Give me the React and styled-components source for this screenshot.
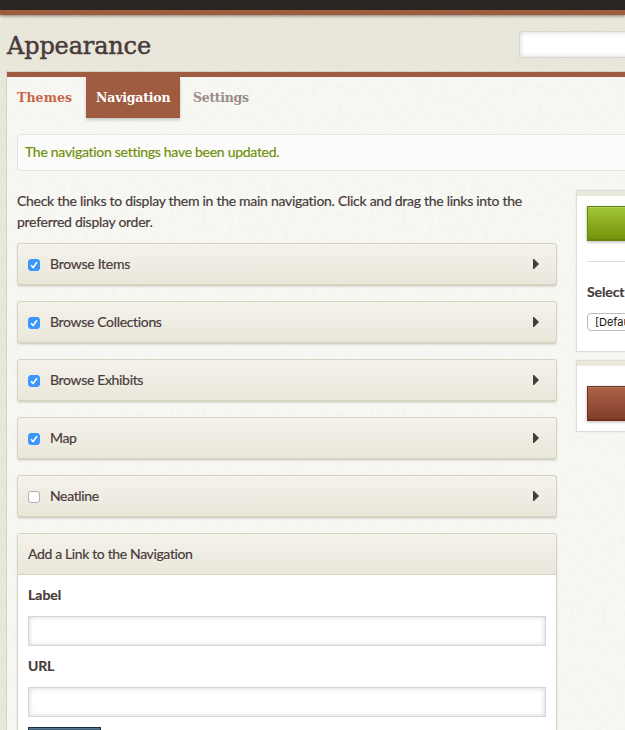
import React from 'react';
import styled, { createGlobalStyle } from 'styled-components';

const grain = (freq, alpha) =>
  `url("data:image/svg+xml,${encodeURIComponent(
    `<svg xmlns='http://www.w3.org/2000/svg' width='200' height='200'><filter id='n' x='0' y='0' width='100%' height='100%'><feTurbulence type='fractalNoise' baseFrequency='${freq}' numOctaves='2' stitchTiles='stitch'/><feColorMatrix values='0 0 0 0 0.25 0 0 0 0 0.22 0 0 0 0 0.12 ${alpha} 0 0 0 ${-alpha * 0.4}'/></filter><rect width='200' height='200' filter='url(#n)'/></svg>`
  )}")`;

const linen = grain(0.6, 0.2);
const paper = grain(0.22, 0.07);
const brick = grain(0.5, 0.6);

const GlobalStyle = createGlobalStyle`
  * { box-sizing: border-box; }
  html, body { margin: 0; height: 730px; overflow: hidden; }
  body {
    background: #ebe9dd ${linen};
    color: #483b3b;
    font: 14px/21px Lato, sans-serif;
  }
`;

const Page = styled.div`
  width: 625px;
  height: 730px;
  overflow: hidden;
`;

const TopBar = styled.div`
  height: 15px;
  background: #a0593e ${brick};
  border-top: 10px solid #2b2621;
  box-shadow: 0 1px 3px rgba(0, 0, 0, 0.45);
`;

const Header = styled.header`
  display: flex;
  justify-content: space-between;
  height: 57px;
  padding-left: 7px;
`;

const Title = styled.h1`
  margin: 13px 0 0;
  font: 400 24px/36px 'DejaVu Serif', serif;
  letter-spacing: ${(p) => p.$track}px;
  -webkit-text-stroke: 0.5px #483b3b;
`;

const Search = styled.input`
  width: 120px;
  height: 27px;
  margin: 16px -14px 0 0;
  border: 1px solid #d6d6d2;
  border-radius: 0;
  background: #fff;
  box-shadow: inset 0 0 5px rgba(0, 0, 0, 0.18);
`;

const Content = styled.main`
  height: 658px;
  margin-left: 7px;
  background: #f7f8f3 ${paper};
  box-shadow: 0 0 0 1px #d3d0c5;
`;

const Stripe = styled.div`
  height: 5px;
  background: #a0593e ${brick};
`;

const Tabs = styled.nav`
  display: flex;
  height: 41px;
`;

const Tab = styled.a`
  width: ${(p) => p.$width}px;
  padding-left: ${(p) => p.$inset ?? 10}px;
  background: ${(p) => (p.$active ? `#a0593e ${brick}` : 'transparent')};
  box-shadow: ${(p) => (p.$active ? '0 2px 3px rgba(0,0,0,0.2)' : 'none')};
  color: ${(p) => p.$color};
  font: bold 12.5px/41px 'DejaVu Serif', serif;
  letter-spacing: ${(p) => p.$track}px;
  white-space: nowrap;
`;

const Flash = styled.div`
  height: 37px;
  margin: 16px -10px 0 10px;
  padding: 6px 7px;
  border: 1px solid #e4e4e4;
  border-radius: 4px;
  background: rgba(255, 255, 255, 0.6);
  color: #6f8f0c;
`;

const Line = styled.span`
  display: inline-block;
  letter-spacing: ${(p) => p.$track ?? -0.28}px;
  white-space: nowrap;
  -webkit-text-stroke: 0.2px currentColor;
`;

const Columns = styled.div`
  display: grid;
  grid-template-columns: 540px 120px;
  column-gap: 19px;
  padding: 19px 0 0 10px;
`;

const Intro = styled.p`
  margin: 0 0 11px;
`;

const Rows = styled.ul`
  display: grid;
  gap: 15px;
  margin: 0;
  padding: 0;
  list-style: none;
`;

const Row = styled.li`
  display: flex;
  align-items: flex-start;
  height: 43px;
  padding: 9px 17px 0 10px;
  border: 1px solid #d6d3c2;
  border-bottom-width: 2px;
  border-radius: 3px;
  background: linear-gradient(#f5f2ec, #e9e6da);
  box-shadow: 0 1px 2px rgba(0, 0, 0, 0.1);
`;

const Check = styled.span`
  display: flex;
  width: 12px;
  height: 12px;
  margin: 6px 10px 0 0;
  border: 1px solid ${(p) => (p.$on ? '#3b97fb' : '#b2b2b2')};
  border-radius: 3px;
  background: ${(p) => (p.$on ? '#3b97fb' : '#fff')};
`;

const Arrow = styled.svg`
  width: 6px;
  height: 10px;
  margin: 6px 0 0 auto;
  fill: #483b3b;
`;

const Panel = styled.section`
  height: 220px;
  margin-top: 15px;
  border: 1px solid #d6d3c2;
  border-radius: 3px;
  background: #fff;
  box-shadow: 0 1px 2px rgba(0, 0, 0, 0.12);
`;

const PanelHead = styled.div`
  height: 41px;
  padding: 9px 10px;
  border-bottom: 1px solid #d6d3c2;
  border-radius: 2px 2px 0 0;
  background: linear-gradient(#f5f2ec, #e9e6da);
`;

const Form = styled.div`
  display: flex;
  flex-direction: column;
  padding: 9px 10px;
`;

const Label = styled.label`
  display: block;
  height: 21px;
  font-weight: 700;
`;

const Field = styled.input`
  width: 518px;
  height: 30px;
  margin: 11px 0 9px;
  border: 1px solid #d6d6d6;
  border-radius: 0;
  background: #fff;
  box-shadow: inset 0 0 5px rgba(0, 0, 0, 0.18);
`;

const AddButton = styled.button`
  width: 73px;
  height: 35px;
  margin-top: 1px;
  border: 1px solid #172f3f;
  background: linear-gradient(#406078, #304b60);
  box-shadow: inset 0 1px 0 #57778c;
`;

const Side = styled.aside`
  display: flex;
  flex-direction: column;
  gap: 8px;
`;

const Card = styled.div`
  height: ${(p) => p.$height}px;
  padding: ${(p) => p.$top}px 10px 0;
  border: 1px solid #dcdcd8;
  background: linear-gradient(#ebe8dc 5px, #fff 5px);
  box-shadow: 0 0 2px rgba(0, 0, 0, 0.08);
`;

const BigButton = styled.button`
  display: block;
  width: 120px;
  height: 35px;
  border: 1px solid ${(p) => p.$edge};
  border-bottom-width: 2px;
  background: linear-gradient(${(p) => p.$from}, ${(p) => p.$to});
  box-shadow: inset 0 1px 0 rgba(255, 255, 255, 0.18), 0 1px 3px rgba(0, 0, 0, 0.3);
`;

const Rule = styled.hr`
  height: 1px;
  margin: 20px 0 19px;
  border: 0;
  background: #dedede;
`;

const SelectBox = styled.div`
  width: 120px;
  height: 18px;
  margin-top: 11px;
  padding-left: 7px;
  border: 1px solid #bcbcbc;
  border-radius: 4px;
  color: #111;
  font: 11px/16px Inter, sans-serif;
`;

const items = [
  { name: 'Browse Items', on: true, track: -0.27 },
  { name: 'Browse Collections', on: true, track: -0.33 },
  { name: 'Browse Exhibits', on: true, track: -0.33 },
  { name: 'Map', on: true, track: -0.4 },
  { name: 'Neatline', on: false, track: -0.36 },
];

function CheckBox({ on }) {
  return (
    <Check $on={on} role="checkbox" aria-checked={on}>
      {on && (
        <svg width="10" height="10" viewBox="0 0 10 10">
          <path d="M2 5.3 4.1 7.5 8 2.2" fill="none" stroke="#fff" strokeWidth="1.6" />
        </svg>
      )}
    </Check>
  );
}

export default function App() {
  return (
    <Page>
      <GlobalStyle />
      <TopBar />
      <Header>
        <Title $track={-0.15}>Appearance</Title>
        <Search aria-label="Search" />
      </Header>
      <Content>
        <Stripe />
        <Tabs>
          <Tab $width={79} $color="#cb6547" $track={0.1}>Themes</Tab>
          <Tab $width={94} $color="#fff" $active $track={-0.2}>Navigation</Tab>
          <Tab $width={90} $color="#9b8c87" $inset={13} $track={-0.3}>Settings</Tab>
        </Tabs>
        <Flash><Line>The navigation settings have been updated.</Line></Flash>
        <Columns>
          <div>
            <Intro>
              <Line>Check the links to display them in the main navigation. Click and drag the links into the</Line>
              <Line>preferred display order.</Line>
            </Intro>
            <Rows>
              {items.map(({ name, on, track }) => (
                <Row key={name}>
                  <CheckBox on={on} />
                  <Line $track={track}>{name}</Line>
                  <Arrow viewBox="0 0 6 10"><path d="M0 0h1l5 5-5 5H0z" /></Arrow>
                </Row>
              ))}
            </Rows>
            <Panel>
              <PanelHead><Line $track={-0.36}>Add a Link to the Navigation</Line></PanelHead>
              <Form>
                <Label><Line $track={0}>Label</Line></Label>
                <Field />
                <Label><Line $track={-0.2}>URL</Line></Label>
                <Field />
                <AddButton aria-label="Add link" />
              </Form>
            </Panel>
          </div>
          <Side>
            <Card $height={162} $top={15}>
              <BigButton $from="#a4c639" $to="#74930b" $edge="#67850a" aria-label="Save" />
              <Rule />
              <Label><Line $track={-0.1}>Select</Line></Label>
              <SelectBox>[Default]</SelectBox>
            </Card>
            <Card $height={72} $top={25}>
              <BigButton $from="#ac6147" $to="#823f2a" $edge="#71301e" aria-label="Reset" />
            </Card>
          </Side>
        </Columns>
      </Content>
    </Page>
  );
}
